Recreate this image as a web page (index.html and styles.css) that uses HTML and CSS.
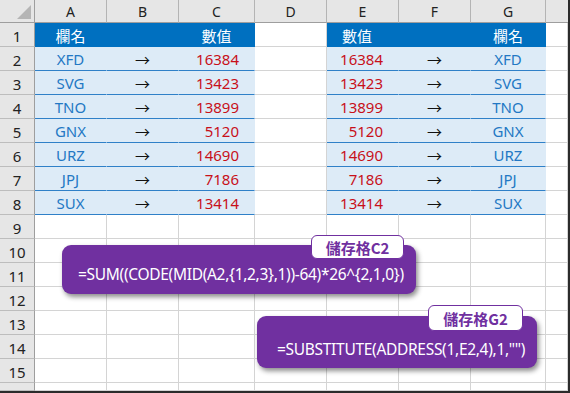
FILE: index.html
```html
<!DOCTYPE html>
<html>
<head>
<meta charset="utf-8">
<link rel="stylesheet" href="styles.css">
</head>
<body>
<div class="sheet">
  <div class="row hdr">
    <div class="corner"><span class="tri"></span></div>
    <div class="ch">A</div><div class="ch">B</div><div class="ch">C</div><div class="ch">D</div>
    <div class="ch">E</div><div class="ch">F</div><div class="ch">G</div><div class="ch"></div>
  </div>
  <div class="row">
    <div class="rh">1</div>
    <div class="c th ctr">欄名</div><div class="c th"></div><div class="c th ctr">數值</div>
    <div class="c"></div>
    <div class="c th lft">數值</div><div class="c th"></div><div class="c th ctr">欄名</div>
    <div class="c"></div>
  </div>
  <div class="row">
    <div class="rh">2</div>
    <div class="c t nm">XFD</div><div class="c t ar">→</div><div class="c t num">16384</div>
    <div class="c"></div>
    <div class="c t num">16384</div><div class="c t ar">→</div><div class="c t nm">XFD</div>
    <div class="c"></div>
  </div>
  <div class="row">
    <div class="rh">3</div>
    <div class="c t nm">SVG</div><div class="c t ar">→</div><div class="c t num">13423</div>
    <div class="c"></div>
    <div class="c t num">13423</div><div class="c t ar">→</div><div class="c t nm">SVG</div>
    <div class="c"></div>
  </div>
  <div class="row">
    <div class="rh">4</div>
    <div class="c t nm">TNO</div><div class="c t ar">→</div><div class="c t num">13899</div>
    <div class="c"></div>
    <div class="c t num">13899</div><div class="c t ar">→</div><div class="c t nm">TNO</div>
    <div class="c"></div>
  </div>
  <div class="row">
    <div class="rh">5</div>
    <div class="c t nm">GNX</div><div class="c t ar">→</div><div class="c t num">5120</div>
    <div class="c"></div>
    <div class="c t num">5120</div><div class="c t ar">→</div><div class="c t nm">GNX</div>
    <div class="c"></div>
  </div>
  <div class="row">
    <div class="rh">6</div>
    <div class="c t nm">URZ</div><div class="c t ar">→</div><div class="c t num">14690</div>
    <div class="c"></div>
    <div class="c t num">14690</div><div class="c t ar">→</div><div class="c t nm">URZ</div>
    <div class="c"></div>
  </div>
  <div class="row">
    <div class="rh">7</div>
    <div class="c t nm">JPJ</div><div class="c t ar">→</div><div class="c t num">7186</div>
    <div class="c"></div>
    <div class="c t num">7186</div><div class="c t ar">→</div><div class="c t nm">JPJ</div>
    <div class="c"></div>
  </div>
  <div class="row">
    <div class="rh">8</div>
    <div class="c t nm">SUX</div><div class="c t ar">→</div><div class="c t num">13414</div>
    <div class="c"></div>
    <div class="c t num">13414</div><div class="c t ar">→</div><div class="c t nm">SUX</div>
    <div class="c"></div>
  </div>
  <div class="row"><div class="rh">9</div><div class="c"></div><div class="c"></div><div class="c"></div><div class="c"></div><div class="c"></div><div class="c"></div><div class="c"></div><div class="c"></div></div>
  <div class="row"><div class="rh">10</div><div class="c"></div><div class="c"></div><div class="c"></div><div class="c"></div><div class="c"></div><div class="c"></div><div class="c"></div><div class="c"></div></div>
  <div class="row"><div class="rh">11</div><div class="c"></div><div class="c"></div><div class="c"></div><div class="c"></div><div class="c"></div><div class="c"></div><div class="c"></div><div class="c"></div></div>
  <div class="row"><div class="rh">12</div><div class="c"></div><div class="c"></div><div class="c"></div><div class="c"></div><div class="c"></div><div class="c"></div><div class="c"></div><div class="c"></div></div>
  <div class="row"><div class="rh">13</div><div class="c"></div><div class="c"></div><div class="c"></div><div class="c"></div><div class="c"></div><div class="c"></div><div class="c"></div><div class="c"></div></div>
  <div class="row"><div class="rh">14</div><div class="c"></div><div class="c"></div><div class="c"></div><div class="c"></div><div class="c"></div><div class="c"></div><div class="c"></div><div class="c"></div></div>
  <div class="row"><div class="rh">15</div><div class="c"></div><div class="c"></div><div class="c"></div><div class="c"></div><div class="c"></div><div class="c"></div><div class="c"></div><div class="c"></div></div>
  <div class="row last"><div class="rh"></div><div class="c"></div><div class="c"></div><div class="c"></div><div class="c"></div><div class="c"></div><div class="c"></div><div class="c"></div><div class="c"></div></div>

  <div class="callout co1">=SUM((CODE(MID(A2,{1,2,3},1))-64)*26^{2,1,0})</div>
  <div class="tag tag1">儲存格C2</div>
  <div class="callout co2">=SUBSTITUTE(ADDRESS(1,E2,4),1,"")</div>
  <div class="tag tag2">儲存格G2</div>
</div>
</body>
</html>
```

FILE: styles.css
```css
* { box-sizing: border-box; }
html, body { margin: 0; padding: 0; background: #fff; }
.sheet {
  position: relative;
  width: 570px;
  height: 393px;
  border-right: 2px solid #2b2b2b;
  border-bottom: 2px solid #2b2b2b;
  overflow: hidden;
  font-family: "Noto Sans", "Noto Sans CJK TC", sans-serif;
  background: #fff;
}
.row {
  display: grid;
  grid-template-columns: 35px 72px 72px 76px 72px 72px 72px 75px 1fr;
  height: 24px;
}
.row.hdr { height: 23px; }
.row.last { height: 8px; }
.corner, .ch {
  background: #e6e6e6;
  border-right: 1px solid #b4b4b4;
  border-bottom: 1px solid #9e9e9e;
}
.corner { position: relative; border-right-color: #9e9e9e; }
.tri {
  position: absolute;
  right: 3px;
  bottom: 3px;
  width: 14px;
  height: 14px;
  background: #b5b5b5;
  clip-path: polygon(100% 0, 100% 100%, 0 100%);
}
.ch {
  display: flex;
  align-items: center;
  justify-content: center;
  font-size: 14px;
  color: #222;
  padding-top: 1px;
}
.ch:last-child { border-right: none; }
.rh {
  background: #e6e6e6;
  border-right: 1px solid #9e9e9e;
  border-bottom: 1px solid #bdbdbd;
  display: flex;
  align-items: center;
  justify-content: center;
  font-size: 15px;
  color: #222;
  padding-top: 2px;
}
.c {
  border-right: 1px solid #d4d4d4;
  border-bottom: 1px solid #d4d4d4;
  display: flex;
  align-items: center;
  font-size: 15px;
  padding-top: 1px;
}
.t {
  background: #ddebf7;
  border-right-color: #ddebf7;
  border-bottom-color: #2f80c8;
}
.th {
  background: #0070c0;
  border-right-color: #0070c0;
  border-bottom-color: #0070c0;
  color: #fff;
  font-family: "Noto Sans CJK TC", sans-serif;
  font-size: 15px;
}
.ctr { justify-content: center; }
.lft { justify-content: flex-start; padding-left: 15px; }
.nm { justify-content: center; color: #2378c4; }
.ar { justify-content: center; color: #111; }
.num { justify-content: flex-end; padding-right: 15px; color: #c8101a; }

.callout {
  position: absolute;
  background: #7030a0;
  color: #fff;
  border-radius: 9px;
  box-shadow: 2px 3px 5px rgba(0, 0, 0, 0.45);
  font-size: 15.5px;
  letter-spacing: -0.3px;
  display: flex;
  align-items: center;
  white-space: nowrap;
}
.co1 { left: 62px; top: 245px; width: 354px; height: 49px; padding: 8px 0 0 16px; }
.co2 { left: 257px; top: 316px; width: 280px; height: 52px; padding: 14px 0 0 20px; }
.tag {
  position: absolute;
  background: #fff;
  border: 1px solid #7030a0;
  border-radius: 6px;
  color: #7030a0;
  font-family: "Noto Sans CJK TC", sans-serif;
  font-weight: bold;
  font-size: 15px;
  display: flex;
  align-items: center;
  justify-content: center;
}
.tag1 { left: 311px; top: 235px; width: 93px; height: 24px; }
.tag2 { left: 428px; top: 305px; width: 95px; height: 26px; }
```
